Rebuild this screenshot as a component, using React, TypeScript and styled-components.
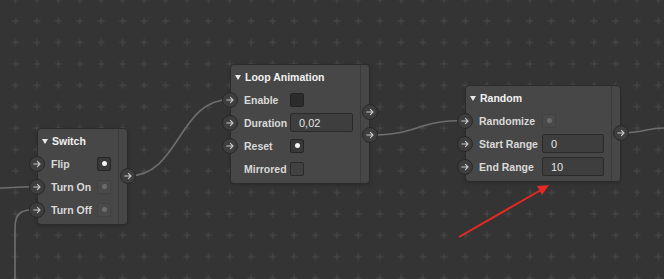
import React from 'react';
import styled, { createGlobalStyle, css } from 'styled-components';

const GlobalStyle = createGlobalStyle`
  html, body {
    margin: 0;
    padding: 0;
    background: #343434;
  }
  body {
    font-family: 'Liberation Sans', Arial, sans-serif;
  }
`;

const Canvas = styled.div`
  position: relative;
  width: 664px;
  height: 279px;
  overflow: hidden;
  background: #343434;
`;

const Layer = styled.svg`
  position: absolute;
  left: 0;
  top: 0;
  width: 664px;
  height: 279px;
  pointer-events: none;
`;

const NodeBox = styled.div<{ $x: number; $y: number; $w: number }>`
  position: absolute;
  left: ${(p) => p.$x}px;
  top: ${(p) => p.$y}px;
  width: ${(p) => p.$w}px;
  box-sizing: border-box;
  display: flex;
  background: #474747;
  border: 1px solid #2b2b2b;
  border-radius: 4px;
  box-shadow: 0 1px 3px rgba(0, 0, 0, 0.2);
`;

const Main = styled.div`
  flex: 1;
  display: flex;
  flex-direction: column;
  padding-bottom: 3px;
`;

const Title = styled.div`
  height: 23px;
  display: flex;
  align-items: center;
  gap: 4px;
  padding-left: 4px;
  font-size: 10.5px;
  font-weight: 700;
  color: #f2f2f2;
`;

const Caret = styled.span`
  width: 0;
  height: 0;
  margin-top: 1px;
  border-left: 3px solid transparent;
  border-right: 3px solid transparent;
  border-top: 5px solid #e8e8e8;
`;

const Strip = styled.div`
  width: 8px;
  border-left: 1px solid #3a3a3a;
  display: flex;
  flex-direction: column;
  align-items: flex-end;
  gap: 7px;
  padding-top: 39px;
`;

const Row = styled.div`
  height: 23px;
  display: flex;
  align-items: center;
`;

const Label = styled.span<{ $w: number }>`
  width: ${(p) => p.$w}px;
  margin-left: 6px;
  flex-shrink: 0;
  font-size: 10.5px;
  font-weight: 700;
  color: #d9d9d9;
  white-space: nowrap;
`;

const SocketRing = styled.div<{ $side: 'in' | 'out'; $hidden?: boolean }>`
  width: 16px;
  height: 16px;
  box-sizing: border-box;
  flex-shrink: 0;
  border-radius: 50%;
  background: #3e3e3e;
  border: 1px solid #282828;
  display: flex;
  align-items: center;
  justify-content: center;
  margin-left: ${(p) => (p.$side === 'in' ? '-9px' : '0')};
  margin-right: ${(p) => (p.$side === 'out' ? '-9px' : '0')};
  visibility: ${(p) => (p.$hidden ? 'hidden' : 'visible')};
`;

type Tone = 'on' | 'dim' | 'dark' | 'empty';

const tones: Record<Tone, ReturnType<typeof css>> = {
  on: css`
    background: #393939;
    border: 1px solid #262626;
  `,
  dim: css`
    background: #4a4a4a;
    border: 1px solid #414141;
  `,
  dark: css`
    background: #2c2c2c;
    border: 1px solid #232323;
  `,
  empty: css`
    background: #424242;
    border: 1px solid #2a2a2a;
  `,
};

const Check = styled.div<{ $tone: Tone }>`
  width: 14px;
  height: 14px;
  box-sizing: border-box;
  border-radius: 2px;
  display: flex;
  align-items: center;
  justify-content: center;
  ${(p) => tones[p.$tone]}
`;

const Dot = styled.span<{ $dim?: boolean }>`
  width: 5px;
  height: 5px;
  border-radius: 50%;
  background: ${(p) => (p.$dim ? '#6c6c6c' : '#f4f4f4')};
`;

const Field = styled.div<{ $w: number }>`
  width: ${(p) => p.$w}px;
  height: 19px;
  box-sizing: border-box;
  border: 1px solid #2a2a2a;
  border-radius: 2px;
  background: #3e3e3e;
  padding-left: 8px;
  display: flex;
  align-items: center;
  font-size: 11px;
  color: #e4e4e4;
`;

const Arrow = () => (
  <svg width="8" height="8" viewBox="0 0 8 8">
    <path
      d="M0.8 4H7M4.4 1.4L7 4L4.4 6.6"
      fill="none"
      stroke="#c9c9c9"
      strokeWidth="1.1"
      strokeLinecap="round"
      strokeLinejoin="round"
    />
  </svg>
);

const Socket = ({ side, hidden }: { side: 'in' | 'out'; hidden?: boolean }) => (
  <SocketRing $side={side} $hidden={hidden}>
    <Arrow />
  </SocketRing>
);

type Control =
  | { kind: 'check'; tone: Tone; dot?: 'on' | 'dim' }
  | { kind: 'field'; value: string; width: number };

type Port = { label: string; input?: boolean; control: Control };

type NodeSpec = {
  title: string;
  x: number;
  y: number;
  width: number;
  labelWidth: number;
  ports: Port[];
  outputs: number;
};

const nodes: NodeSpec[] = [
  {
    title: 'Switch',
    x: 37,
    y: 128,
    width: 91,
    labelWidth: 46,
    outputs: 1,
    ports: [
      { label: 'Flip', input: true, control: { kind: 'check', tone: 'on', dot: 'on' } },
      { label: 'Turn On', input: true, control: { kind: 'check', tone: 'dim', dot: 'dim' } },
      { label: 'Turn Off', input: true, control: { kind: 'check', tone: 'dim', dot: 'dim' } },
    ],
  },
  {
    title: 'Loop Animation',
    x: 230,
    y: 64,
    width: 140,
    labelWidth: 46,
    outputs: 2,
    ports: [
      { label: 'Enable', input: true, control: { kind: 'check', tone: 'dark' } },
      { label: 'Duration', input: true, control: { kind: 'field', value: '0,02', width: 63 } },
      { label: 'Reset', input: true, control: { kind: 'check', tone: 'on', dot: 'on' } },
      { label: 'Mirrored', control: { kind: 'check', tone: 'empty' } },
    ],
  },
  {
    title: 'Random',
    x: 465,
    y: 85,
    width: 156,
    labelWidth: 63,
    outputs: 1,
    ports: [
      { label: 'Randomize', input: true, control: { kind: 'check', tone: 'dim', dot: 'dim' } },
      { label: 'Start Range', input: true, control: { kind: 'field', value: '0', width: 62 } },
      { label: 'End Range', input: true, control: { kind: 'field', value: '10', width: 62 } },
    ],
  },
];

const renderControl = (c: Control) =>
  c.kind === 'field' ? (
    <Field $w={c.width}>{c.value}</Field>
  ) : (
    <Check $tone={c.tone}>{c.dot && <Dot $dim={c.dot === 'dim'} />}</Check>
  );

const GraphNode = ({ node }: { node: NodeSpec }) => (
  <NodeBox $x={node.x} $y={node.y} $w={node.width}>
    <Main>
      <Title>
        <Caret />
        {node.title}
      </Title>
      {node.ports.map((port) => (
        <Row key={port.label}>
          <Socket side="in" hidden={!port.input} />
          <Label $w={node.labelWidth}>{port.label}</Label>
          {renderControl(port.control)}
        </Row>
      ))}
    </Main>
    <Strip>
      {Array.from({ length: node.outputs }, (_, i) => (
        <Socket key={i} side="out" />
      ))}
    </Strip>
  </NodeBox>
);

const wires = [
  'M0 188 C14 188 22 186.5 37 186.5',
  'M37 209.5 C22 209.5 15 212 15 228 L15 279',
  'M128 176 C180 176 178 99.5 230 99.5',
  'M370 135 C420 135 415 120.5 465 120.5',
  'M621 133 C642 133 648 128 664 128',
];

const GRID = 21.43;
const HALF = GRID / 2;

export default function App() {
  return (
    <>
      <GlobalStyle />
      <Canvas>
        <Layer viewBox="0 0 664 279">
          <defs>
            <pattern
              id="grid"
              width={GRID}
              height={GRID}
              x={15.5 - HALF}
              y={21 - HALF}
              patternUnits="userSpaceOnUse"
            >
              <rect x={HALF - 3.5} y={HALF - 0.5} width="7" height="1" fill="#4a4a4a" />
              <rect x={HALF - 0.5} y={HALF - 3.5} width="1" height="7" fill="#4a4a4a" />
            </pattern>
          </defs>
          <rect width="664" height="279" fill="url(#grid)" />
          {wires.map((d) => (
            <path key={d} d={d} fill="none" stroke="#6e6e6e" strokeWidth="1.6" />
          ))}
        </Layer>
        {nodes.map((n) => (
          <GraphNode key={n.title} node={n} />
        ))}
        <Layer viewBox="0 0 664 279">
          <line x1="459" y1="237" x2="541" y2="190" stroke="#e42a22" strokeWidth="2" />
          <polygon points="549,185 542,195 537,186" fill="#e42a22" />
        </Layer>
      </Canvas>
    </>
  );
}
